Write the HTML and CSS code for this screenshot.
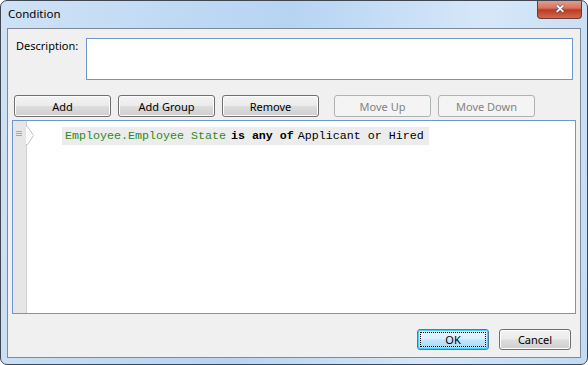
FILE: index.html
```html
<!DOCTYPE html>
<html lang="en">
<head>
    <meta charset="UTF-8">
    <title>Condition</title>
    <link rel="stylesheet" href="styles.css">
</head>
<body>
    <div class="window">
        <div class="titlebar">
            <span class="title">Condition</span>
            <div class="close">&#x2715;</div>
        </div>
        <div class="client">
            <div class="desc-row">
                <label for="desc">Description:</label>
                <textarea id="desc" class="desc-box"></textarea>
            </div>

            <!-- Toolbar -->
            <div class="toolbar">
                <button class="btn">Add</button>
                <button class="btn">Add Group</button>
                <button class="btn">Remove</button>
                <button class="btn spaced" disabled>Move Up</button>
                <button class="btn" disabled>Move Down</button>
            </div>

            <div class="editor">
                <div class="gutter">
                    <span class="grip"></span>
                    <svg class="arrow" width="8" height="20" viewBox="0 0 8 20">
                        <path d="M0 0.5 H1.5 L7.5 9.5 L1.5 18.5 H0" fill="#ffffff" stroke="#c4c4c4" stroke-width="1"/>
                    </svg>
                </div>
                <div class="lines">
                    <div class="expr">
                        <span class="field">Employee.Employee State</span><span class="op">is any of</span><span class="val">Applicant or Hired</span>
                    </div>
                </div>
            </div>

            <div class="footer">
                <button class="btn ok"><span class="focus">OK</span></button>
                <button class="btn cancel">Cancel</button>
            </div>
        </div>
    </div>
</body>
</html>
```

FILE: styles.css
```css
* {
    margin: 0;
    padding: 0;
    box-sizing: border-box;
}
body {
    background: #ffffff;
    font-family: 'Noto Sans', 'Open Sans', sans-serif;
    font-size: 11px;
    color: #000;
}
.window {
    width: 588px;
    height: 365px;
    border: 1px solid #3f4650;
    border-radius: 7px;
    background: linear-gradient(100deg, #cfe2f6 0%, #b6d4f2 45%, #d6e7f9 75%, #c2dbf4 100%);
    display: flex;
    flex-direction: column;
    overflow: hidden;
}
.titlebar {
    height: 27px;
    display: flex;
    align-items: flex-start;
    justify-content: space-between;
    padding-left: 7px;
}
.title {
    margin-top: 5px;
    font-size: 11.5px;
    color: #000;
}
.close {
    width: 45px;
    height: 19px;
    margin-right: 5px;
    margin-top: -1px;
    border: 1px solid #6b3a34;
    border-top: none;
    border-radius: 0 0 4px 4px;
    background: linear-gradient(#e4a294 0%, #d5735f 45%, #bd3b22 55%, #cf6a4f 100%);
    color: #ffffff;
    font-size: 12px;
    font-weight: bold;
    text-align: center;
    line-height: 17px;
    text-shadow: 0 0 1px #333, 0 0 1px #333;
}
.client {
    flex: 1;
    margin: 0 6px 6px 6px;
    border: 1px solid #7f8a96;
    background: #f0f0f0;
    display: flex;
    flex-direction: column;
}
.desc-row {
    display: flex;
    padding: 9px 7px 0 8px;
}
.desc-row label {
    width: 70px;
    line-height: 14px;
    margin-top: 1px;
}
.desc-box {
    flex: 1;
    height: 42px;
    border: 1px solid #7096cf;
    background: #ffffff;
    resize: none;
    outline: none;
}
.toolbar {
    display: flex;
    gap: 7px;
    margin: 15px 0 0 6px;
}
.btn {
    width: 97px;
    height: 22px;
    border: 1px solid #707070;
    border-radius: 3px;
    background: linear-gradient(#f3f3f3 0%, #ebebeb 48%, #dddddd 52%, #cfcfcf 100%);
    font-family: 'Noto Sans', 'Open Sans', sans-serif;
    font-size: 11px;
    color: #000;
    box-shadow: inset 0 0 0 1px #fcfcfc;
}
.btn:disabled {
    background: #f4f4f4;
    border-color: #adb2b5;
    color: #838383;
    box-shadow: none;
}
.btn.spaced {
    margin-left: 8px;
}
.editor {
    display: flex;
    height: 194px;
    margin: 3px 4px 0 4px;
    border: 1px solid #7096cf;
    background: #ffffff;
}
.gutter {
    position: relative;
    width: 14px;
    background: #e6e6e6;
    border-right: 1px solid #cfcfcf;
}
.grip {
    position: absolute;
    left: 3px;
    top: 10px;
    width: 6px;
    height: 5px;
    border-top: 1px solid #a8a8a8;
    border-bottom: 1px solid #a8a8a8;
}
.grip::after {
    content: '';
    position: absolute;
    left: 0;
    top: 1px;
    width: 6px;
    border-top: 1px solid #a8a8a8;
}
.arrow {
    position: absolute;
    left: 13px;
    top: 5px;
}
.lines {
    flex: 1;
    padding: 6px 0 0 35px;
}
.expr {
    display: inline-flex;
    height: 18px;
    align-items: center;
    padding: 0 5px 0 3px;
    background: #ececec;
    font-family: 'Liberation Mono', 'DejaVu Sans Mono', monospace;
    font-size: 11.67px;
}
.field {
    color: #2a8a1c;
}
.op {
    font-weight: bold;
    margin: 0 4px 0 5px;
}
.val {
    color: #000;
}
.footer {
    display: flex;
    justify-content: flex-end;
    gap: 10px;
    margin: 15px 9px 0 0;
}
.footer .btn {
    width: 72px;
    height: 21px;
}
.btn.ok {
    border-color: #3c7fb1;
    background: linear-gradient(#eaf6fd 0%, #d9f0fc 48%, #bee6fd 52%, #a7d9f5 100%);
    box-shadow: inset 0 0 0 1px #48d0f6;
    padding: 2px;
}
.focus {
    display: block;
    height: 100%;
    border: 1px dotted #000;
    line-height: 13px;
}
```
